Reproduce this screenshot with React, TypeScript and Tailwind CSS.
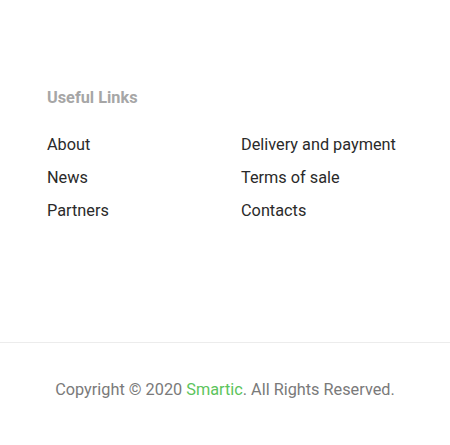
export default function App() {
  return (
    <div className="w-[450px] h-[445px] bg-white font-['Roboto',sans-serif]">
      <div className="h-[342px] pl-[47px] pt-[88px]">
        <h4 className="text-[16.3px] leading-[20px] font-bold text-[#a6a6a6]">Useful Links</h4>
        <div className="mt-[27px] grid grid-cols-[194px_1fr] gap-y-[13px] text-[16.3px] leading-[20px] text-[#2a2a2a]">
          <a>About</a>
          <a>Delivery and payment</a>
          <a>News</a>
          <a>Terms of sale</a>
          <a>Partners</a>
          <a>Contacts</a>
        </div>
      </div>
      <div className="border-t border-[#ececec] h-[95px] flex items-center justify-center">
        <p className="text-[16.3px] leading-[20px] text-[#7a7a7a]">
          Copyright © 2020 <span className="text-[#5cc45c]">Smartic</span>. All Rights Reserved.
        </p>
      </div>
    </div>
  );
}
